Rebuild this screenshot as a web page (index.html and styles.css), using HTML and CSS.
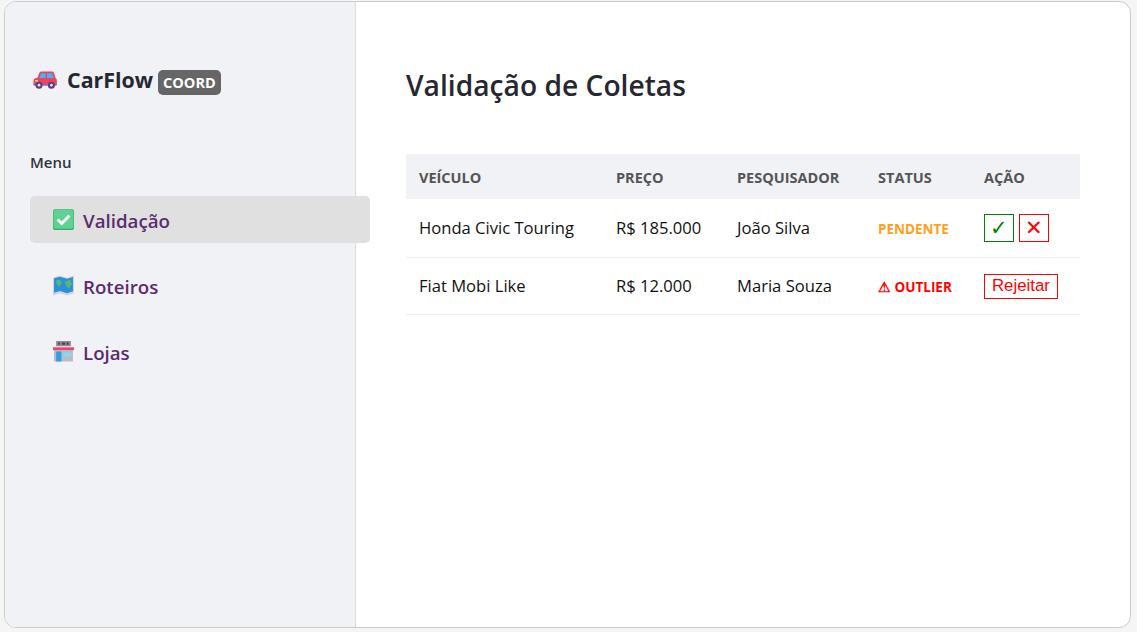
FILE: index.html
```html
<!DOCTYPE html>
<html lang="pt-BR">
<head>
    <meta charset="UTF-8">
    <meta name="viewport" content="width=device-width, initial-scale=1.0">
    <title>CarFlow - Validação de Coletas</title>
    <link rel="stylesheet" href="styles.css">
</head>
<body>

<div class="app-window">
    <!-- Sidebar -->
    <aside class="sidebar">
        <div class="logo">
            <svg class="logo-icon" viewBox="0 0 24 18" width="24" height="18">
                <path d="M0.5 9.5 Q0.5 7.6 2.5 7.2 L4.5 6.8 L6.5 1.6 Q7 0.5 8.2 0.5 L19 0.5 Q20.2 0.5 20.7 1.6 L22.6 7 Q23.8 7.6 23.8 9 L23.8 13.5 Q23.8 14.5 22.8 14.5 L1.5 14.5 Q0.5 14.5 0.5 13.5 Z" fill="#f0405a"/>
                <path d="M8 2.2 L12.6 2.2 L12.6 7 L6.2 7 Z" fill="#43b5f2"/>
                <path d="M14 2.2 L19 2.2 L20.8 7 L14 7 Z" fill="#43b5f2"/>
                <rect x="2" y="9" width="3" height="1.6" fill="#ffd166"/>
                <rect x="0.5" y="12.4" width="23.3" height="2.2" rx="1" fill="#8a6aa8"/>
                <circle cx="6" cy="14.2" r="3.5" fill="#5a3f7a"/>
                <circle cx="6" cy="14.2" r="1.4" fill="#e4deec"/>
                <circle cx="18.4" cy="14.2" r="3.5" fill="#5a3f7a"/>
                <circle cx="18.4" cy="14.2" r="1.4" fill="#e4deec"/>
            </svg>
            <span class="logo-name">CarFlow</span>
            <span class="logo-badge">COORD</span>
        </div>

        <div class="menu-title">Menu</div>

        <a class="nav-item active" href="#">
            <svg class="nav-icon" viewBox="0 0 20 20" width="21" height="21">
                <rect x="0" y="0" width="20" height="20" rx="2.5" fill="#3aa86f"/>
                <rect x="0.5" y="0.3" width="19" height="18.5" rx="2.2" fill="#5ed292"/>
                <path d="M4.5 10 L8.3 13.8 L15.5 6.5" fill="none" stroke="#fff" stroke-width="2.6"/>
            </svg>
            Validação
        </a>
        <a class="nav-item" href="#">
            <svg class="nav-icon" viewBox="0 0 20 20" width="21" height="21">
                <path d="M0 2.5 L6.5 0.5 L13.5 2.5 L20 0.5 L20 17.5 L13.5 19.5 L6.5 17.5 L0 19.5 Z" fill="#d5d2df"/>
                <path d="M1 3.2 L6.5 1.6 L13.5 3.6 L19 1.8 L19 15.5 L13.5 17.3 L6.5 15.3 L1 17 Z" fill="#2f8fd6"/>
                <path d="M3 5 L6.5 4.5 L8.5 7.5 L6 11 L3.5 9 Z M11 6.5 L16.5 4.5 L18 8.5 L15 13 L12.5 10 Z" fill="#55b77a"/>
            </svg>
            Roteiros
        </a>
        <a class="nav-item" href="#">
            <svg class="nav-icon" viewBox="0 0 20 20" width="21" height="21">
                <rect x="3" y="0" width="14" height="5" fill="#8f8898"/>
                <path d="M5 1.5 h1.5 v2 h-1.5 z M8.5 1.5 h3 v2 h-3 z M13 1.5 h2 v2 h-2 z" fill="#4a4450"/>
                <rect x="1" y="8" width="18" height="11.5" fill="#bdb7c7"/>
                <rect x="0" y="6" width="20" height="2.6" fill="#f2436e"/>
                <rect x="3" y="10" width="5" height="9.5" fill="#2f9fe6"/>
                <rect x="10" y="11" width="7.5" height="4" fill="#7fdcf5"/>
            </svg>
            Lojas
        </a>
    </aside>

    <!-- Main content -->
    <main class="content">
        <h1>Validação de Coletas</h1>

        <table class="data-table">
            <thead>
                <tr>
                    <th class="col-vehicle">Veículo</th>
                    <th class="col-price">Preço</th>
                    <th class="col-person">Pesquisador</th>
                    <th class="col-status">Status</th>
                    <th>Ação</th>
                </tr>
            </thead>
            <tbody>
                <tr class="row-tall">
                    <td>Honda Civic Touring</td>
                    <td>R$ 185.000</td>
                    <td>João Silva</td>
                    <td><span class="status pending">PENDENTE</span></td>
                    <td>
                        <button class="btn btn-icon btn-ok">✓</button>
                        <button class="btn btn-icon btn-no">✕</button>
                    </td>
                </tr>
                <tr>
                    <td>Fiat Mobi Like</td>
                    <td>R$ 12.000</td>
                    <td>Maria Souza</td>
                    <td><span class="status outlier">⚠ OUTLIER</span></td>
                    <td><button class="btn btn-text btn-no">Rejeitar</button></td>
                </tr>
            </tbody>
        </table>
    </main>
</div>

</body>
</html>
```

FILE: styles.css
```css
/* Basic Reset */
* {
    margin: 0;
    padding: 0;
    box-sizing: border-box;
}

body {
    font-family: "Open Sans", "Noto Sans", Arial, sans-serif;
    background-color: #f5f5f5;
    height: 632px;
    padding: 1px 6px 4px 4px;
    overflow: hidden;
}

.app-window {
    display: flex;
    height: 627px;
    background-color: #fff;
    border: 1px solid #ccc;
    border-radius: 12px;
}

/* Sidebar */
.sidebar {
    position: relative;
    z-index: 1;
    width: 351px;
    flex-shrink: 0;
    padding: 63px 25px 0;
    background-color: #f0f2f6;
    border-right: 1px solid #ddd;
    border-radius: 11px 0 0 11px;
}

.logo {
    display: flex;
    align-items: center;
    padding-left: 3px;
    height: 28px;
    color: #262730;
}

.logo-icon {
    margin-right: 10px;
    margin-top: 2px;
}

.logo-name {
    font-size: 21.4px;
    font-weight: 700;
    margin-right: 5px;
}

.logo-badge {
    display: flex;
    align-items: center;
    height: 25px;
    margin-top: 7px;
    padding: 0 5px;
    background-color: #666;
    color: #fff;
    font-size: 14.5px;
    font-weight: 700;
    border-radius: 5px;
}

.menu-title {
    margin-top: 59px;
    font-size: 15px;
    font-weight: 600;
    color: #31333f;
}

.nav-item {
    display: flex;
    align-items: center;
    gap: 9px;
    width: 340px;
    height: 47px;
    padding: 2px 23px 0;
    margin-top: 19px;
    border-radius: 5px;
    font-size: 18.7px;
    font-weight: 600;
    color: #5b2c6f;
    text-decoration: none;
}

.nav-icon {
    margin-top: -2px;
}

.nav-item:first-of-type {
    margin-top: 24px;
}

.nav-item.active {
    background-color: #e0e0e0;
}

/* Main content */
.content {
    flex: 1;
    padding: 63px 50px 0;
}

h1 {
    font-size: 28.2px;
    font-weight: 600;
    line-height: 40px;
    color: #262730;
    margin-bottom: 49px;
}

.data-table {
    width: 674px;
    border-collapse: collapse;
    font-size: 16.6px;
    color: #111;
}

.data-table th {
    height: 45px;
    padding: 2px 13px 0;
    background-color: #f0f2f6;
    font-size: 14.5px;
    font-weight: 700;
    text-align: left;
    text-transform: uppercase;
    color: #555;
}

.data-table td {
    height: 57px;
    padding: 0 13px;
    border-bottom: 1px solid #eee;
}

.data-table .row-tall td {
    height: 58px;
}

.col-vehicle { width: 197px; }
.col-price { width: 121px; }
.col-person { width: 141px; }
.col-status { width: 106px; }

.status {
    font-size: 13.5px;
    font-weight: 700;
}

.pending { color: #ff9f1c; }
.outlier { color: #f00; }

.btn {
    background: #fff;
    font-family: "Liberation Sans", Arial, sans-serif;
    font-size: 16.8px;
    height: 25px;
    padding: 0 7px;
    margin-right: 1px;
}

.btn-text {
    display: block;
    margin-top: 1px;
}

.btn-icon {
    width: 30px;
    height: 28px;
    padding: 0;
    font-size: 21px;
    line-height: 26px;
}

.btn-ok {
    color: #008000;
    border: 1px solid #008000;
}

.btn-no {
    color: #f00;
    border: 1px solid #f00;
}
```
